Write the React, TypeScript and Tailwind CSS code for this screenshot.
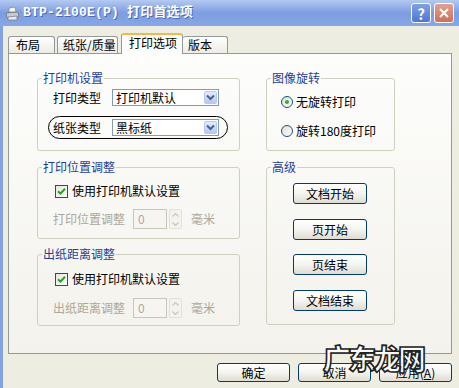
import React from 'react';

const Chevron = () => (
    <svg width="9" height="7" viewBox="0 0 9 7">
        <path d="M1 1.5 L4.5 5 L8 1.5" fill="none" stroke="#4d6185" strokeWidth="2" />
    </svg>
);

const Dropdown = ({value}: {value: string}) => (
    <div className="flex items-center w-[107px] h-[17px] bg-white border border-[#7f9db9]">
        <span className="flex-1 pl-[3px] text-[12px] leading-[14px] text-black">{value}</span>
        <div className="flex items-center justify-center w-[13px] h-[13px] mr-[1px] rounded-[2px] border border-[#b9c9ef] bg-gradient-to-b from-[#e3ebfd] to-[#b4c8f6]">
            <Chevron />
        </div>
    </div>
);

const Check = () => (
    <div className="flex items-center justify-center w-[13px] h-[13px] border border-[#1c5180] bg-gradient-to-br from-[#e6e6e0] to-white">
        <svg width="9" height="9" viewBox="0 0 9 9">
            <path d="M1 4.2 L3.4 6.6 L8 1.8" fill="none" stroke="#21a121" strokeWidth="2" />
        </svg>
    </div>
);

const Radio = ({on}: {on?: boolean}) => (
    <div className="flex items-center justify-center w-[12px] h-[12px] rounded-full border border-[#1c5180] bg-gradient-to-br from-[#dcdcd5] to-white">
        {on && <div className="w-[4px] h-[4px] rounded-full bg-[#3fa340]" />}
    </div>
);

const Spinner = () => (
    <div className="flex flex-col w-[13px] h-[20px] ml-[2px] border border-[#e3e2da] rounded-[2px] bg-[#f4f3ee]">
        <div className="flex-1 flex items-center justify-center">
            <svg width="7" height="4" viewBox="0 0 7 4"><path d="M0.5 3.5 L3.5 0.5 L6.5 3.5" fill="none" stroke="#c9c7ba" strokeWidth="1.2" /></svg>
        </div>
        <div className="flex-1 flex items-center justify-center">
            <svg width="7" height="4" viewBox="0 0 7 4"><path d="M0.5 0.5 L3.5 3.5 L6.5 0.5" fill="none" stroke="#c9c7ba" strokeWidth="1.2" /></svg>
        </div>
    </div>
);

const Group: React.FC<{title: string; className: string; children?: React.ReactNode}> = ({title, className, children}) => (
    <fieldset className={`border border-[#d0d0bf] rounded-[3px] p-0 m-0 min-w-0 ${className}`}>
        <legend className="ml-[4px] px-[1px] text-[12px] leading-[14px] text-[#1e3f97]">{title}</legend>
        {children}
    </fieldset>
);

const XpButton = ({label, className}: {label: string; className: string}) => (
    <div className={`flex items-center justify-center h-[21px] w-[74px] rounded-[3px] border border-[#003c74] bg-gradient-to-b from-white via-[#f4f4f0] to-[#dedcd2] text-[12px] leading-[14px] text-black ${className}`}>
        {label}
    </div>
);

const DisabledRow = ({label}: {label: string}) => (
    <div className="flex items-center ml-[15px] h-[20px]">
        <span className="w-[80px] text-[12px] leading-[14px] text-[#aca899]">{label}</span>
        <div className="flex items-center w-[34px] h-[20px] border border-[#c9c7ba] bg-[#f6f5f1] pl-[4px] text-[12px] text-[#aca899]">0</div>
        <Spinner />
        <span className="ml-[9px] text-[12px] leading-[14px] text-[#aca899]">毫米</span>
    </div>
);

export default function App() {
    return (
        <div className="relative w-[459px] h-[388px] overflow-hidden bg-[#eeede2] font-['Noto_Sans_CJK_SC','Noto_Sans',sans-serif] flex flex-col">

            {/* title bar */}
            <div className="flex items-center h-[26px] shrink-0 bg-gradient-to-b from-[#b3c9f1] via-[#7d9de2] to-[#89a7e6] px-[5px]">
                <svg width="15" height="15" viewBox="0 0 15 15" className="mr-[3px]">
                    <path d="M4 2 L10 1 L11 6 L4 6 Z" fill="#f4f4f4" stroke="#8a8a8a" strokeWidth="0.8" />
                    <path d="M1 7 L13 6 L14 11 L2 12 Z" fill="#c8cbd0" stroke="#6f737a" strokeWidth="0.8" />
                    <path d="M3 11 L12 10 L12 14 L3 14 Z" fill="#e9eaec" stroke="#7b7f85" strokeWidth="0.8" />
                </svg>
                <span className="text-[13px] font-bold text-white font-['Liberation_Mono','Noto_Sans_CJK_SC',monospace] [text-shadow:1px_1px_0_#4a6bb5] tracking-[0.2px]">BTP-2100E(P) 打印首选项</span>
                <div className="ml-auto flex gap-[3px]">
                    <div className="flex items-center justify-center w-[20px] h-[20px] rounded-[3px] border border-white bg-gradient-to-b from-[#7ea0e6] to-[#4c77d4] text-white text-[15px] font-bold leading-none">?</div>
                    <div className="flex items-center justify-center w-[20px] h-[20px] rounded-[3px] border border-white bg-gradient-to-b from-[#e0a291] to-[#cf6d57]">
                        <svg width="12" height="12" viewBox="0 0 12 12"><path d="M2 2 L10 10 M10 2 L2 10" stroke="white" strokeWidth="2" /></svg>
                    </div>
                </div>
            </div>

            <div className="flex-1 flex flex-col border-l-[3px] border-[#84a2e2]">
                {/* tabs */}
                <div className="flex items-end h-[20px] mt-[7px] pl-[5px] text-[12px] leading-[14px] text-black">
                    <div className="flex items-center w-[47px] h-[17px] pl-[7px] rounded-t-[3px] border border-b-0 border-[#919b9c] bg-gradient-to-b from-white to-[#ecebe5]">布局</div>
                    <div className="flex items-center w-[61px] h-[17px] ml-[2px] pl-[5px] rounded-t-[3px] border border-b-0 border-[#919b9c] bg-gradient-to-b from-white to-[#ecebe5]">纸张/质量</div>
                    <div className="relative z-10 flex items-center w-[62px] h-[21px] ml-[3px] -mb-[1px] pl-[7px] pb-[3px] rounded-t-[3px] border border-b-0 border-t-[2px] border-[#919b9c] border-t-[#f5b947] bg-[#fdfdfc]">打印选项</div>
                    <div className="flex items-center w-[45px] h-[17px] pl-[5px] rounded-t-[3px] border border-b-0 border-l-0 border-[#919b9c] bg-gradient-to-b from-white to-[#ecebe5]">版本</div>
                </div>

                {/* panel */}
                <div className="flex gap-[26px] ml-[5px] w-[444px] h-[301px] border border-[#919b9c] bg-gradient-to-b from-[#fdfdfc] to-[#f3f2ec] pl-[28px] pt-[17px]">
                    <div className="flex flex-col w-[203px]">
                        <Group title="打印机设置" className="h-[80px]">
                            <div className="flex items-center ml-[15px] mt-[4px]">
                                <span className="w-[59px] text-[12px] leading-[14px] text-black">打印类型</span>
                                <Dropdown value="打印机默认" />
                            </div>
                            <div className="flex items-center ml-[10px] mt-[10px] w-[180px] h-[23px] pl-[4px] rounded-full border border-black">
                                <span className="w-[59px] text-[12px] leading-[14px] text-black">纸张类型</span>
                                <Dropdown value="黑标纸" />
                            </div>
                        </Group>

                        <Group title="打印位置调整" className="h-[79px] mt-[9px]">
                            <div className="flex items-center gap-[4px] ml-[17px] mt-[10px] text-[12px] leading-[14px] text-black">
                                <Check />
                                <span>使用打印机默认设置</span>
                            </div>
                            <div className="mt-[11px]">
                                <DisabledRow label="打印位置调整" />
                            </div>
                        </Group>

                        <Group title="出纸距离调整" className="h-[79px] mt-[8px]">
                            <div className="flex items-center gap-[4px] ml-[17px] mt-[11px] text-[12px] leading-[14px] text-black">
                                <Check />
                                <span>使用打印机默认设置</span>
                            </div>
                            <div className="mt-[12px]">
                                <DisabledRow label="出纸距离调整" />
                            </div>
                        </Group>
                    </div>

                    <div className="flex flex-col w-[129px]">
                        <Group title="图像旋转" className="h-[80px]">
                            <div className="flex items-center gap-[3px] ml-[14px] mt-[10px] text-[12px] leading-[14px] text-black">
                                <Radio on />
                                <span>无旋转打印</span>
                            </div>
                            <div className="flex items-center gap-[3px] ml-[14px] mt-[15px] text-[12px] leading-[14px] text-black">
                                <Radio />
                                <span>旋转180度打印</span>
                            </div>
                        </Group>

                        <Group title="高级" className="h-[165px] mt-[9px]">
                            <div className="flex flex-col ml-[26px]">
                                <XpButton label="文档开始" className="mt-[9px]" />
                                <XpButton label="页开始" className="mt-[15px]" />
                                <XpButton label="页结束" className="mt-[14px]" />
                                <XpButton label="文档结束" className="mt-[15px]" />
                            </div>
                        </Group>
                    </div>
                </div>

                {/* dialog buttons */}
                <div className="flex gap-[8px] mt-[9px] ml-[214px] text-[12px] leading-[14px] text-black">
                    {['确定', '取消', '应用(A)'].map((b) => (
                        <div key={b} className="flex items-center justify-center w-[73px] h-[19px] rounded-[3px] border border-[#003c74] bg-gradient-to-b from-white via-[#f4f4f0] to-[#dedcd2]">
                            {b === '应用(A)' ? <span>应用(<span className="underline">A</span>)</span> : b}
                        </div>
                    ))}
                </div>
            </div>

            {/* watermark */}
            <div className="absolute left-[323px] top-[344px] text-[28px] font-black leading-none tracking-[-3px] text-white/90 [-webkit-text-stroke:1.6px_#222] font-['Noto_Sans_CJK_SC',sans-serif]">
                广东龙网
            </div>
        </div>
    );
}
